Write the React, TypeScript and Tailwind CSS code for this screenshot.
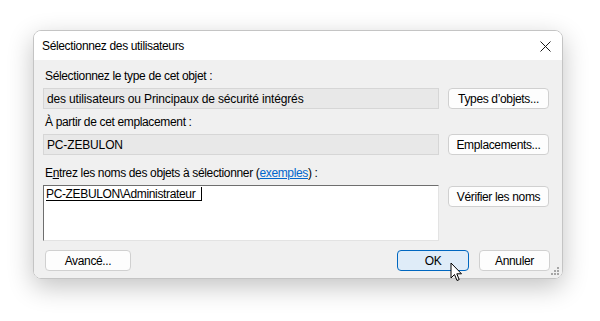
import React from 'react'

const font = { fontFamily: '"Liberation Sans", Arial, sans-serif' }

function Btn({ label, className = '' }: { label: React.ReactNode; className?: string }) {
  return (
    <div
      className={
        'h-[21px] flex items-center justify-center rounded-[4px] border border-[#d0d0d0] bg-[#fdfdfd] text-[12px] tracking-[-0.35px] text-black ' +
        className
      }
    >
      {label}
    </div>
  )
}

export default function App() {
  return (
    <div className="relative w-[600px] h-[321px] bg-white pt-[30px] pl-[33px] text-black" style={font}>
      <div className="w-[530px] h-[249px] flex flex-col rounded-[8px] border border-[#c4c4c4] overflow-hidden shadow-[0_8px_26px_rgba(0,0,0,0.24)]">
        {/* title bar */}
        <div className="h-[29px] shrink-0 bg-white flex items-center justify-between pl-[8px] pr-[11px]">
          <span className="text-[12px] tracking-[-0.35px] pt-[1px]">Sélectionnez des utilisateurs</span>
          <svg width="11" height="11" viewBox="0 0 11 11" className="mt-[2px]">
            <path d="M0.5 0.5 L10.5 10.5 M10.5 0.5 L0.5 10.5" stroke="#1a1a1a" strokeWidth="1" />
          </svg>
        </div>

        {/* body */}
        <div className="relative flex-1 bg-[#f0f0f0] pl-[9px] pr-[12px] pt-[9px] text-[12px] tracking-[-0.35px]">
          <div className="h-[15px] leading-[15px] pl-[2px]">Sélectionnez le type de cet objet :</div>
          <div className="mt-[4px] flex items-center gap-[9px]">
            <div className="w-[396px] h-[21px] flex items-center pl-[3px] bg-[#e8e8e8] border border-[#d6d6d6] tracking-[-0.15px]">
              des utilisateurs ou Principaux de sécurité intégrés
            </div>
            <Btn label="Types d’objets..." className="w-[101px] h-[20px]" />
          </div>

          <div className="mt-[6px] h-[15px] leading-[15px] pl-[2px]">À partir de cet emplacement :</div>
          <div className="mt-[4px] flex items-center gap-[9px]">
            <div className="w-[396px] h-[21px] flex items-center pl-[3px] bg-[#e8e8e8] border border-[#d6d6d6] tracking-[-0.15px]">
              PC-ZEBULON
            </div>
            <Btn label="Emplacements..." className="w-[101px] h-[20px]" />
          </div>

          <div className="mt-[11px] h-[15px] leading-[15px] pl-[2px]">
            E<span className="underline">n</span>trez les noms des objets à sélectionner (
            <span className="text-[#0066cc] underline">exemples</span>) :
          </div>
          <div className="mt-[4px] flex items-start gap-[9px]">
            <div className="w-[396px] h-[56px] bg-white border border-t-[#6e6e6e] border-l-[#6e6e6e] border-r-[#e3e3e3] border-b-[#e3e3e3] pl-[2px] pt-[1px]">
              <div className="flex items-center h-[14px]">
                <span className="underline underline-offset-[2px] leading-[14px]">PC-ZEBULON\Administrateur&nbsp;&nbsp;</span>
                <span className="w-[1px] h-[14px] bg-black" />
              </div>
            </div>
            <Btn label="Vérifier les noms" className="w-[101px] h-[20px] mt-[1px]" />
          </div>

          <div className="mt-[9px] flex items-center">
            <Btn label="Avancé..." className="ml-[2px] w-[86px]" />
            <div className="flex-1" />
            <div className="w-[72px] h-[21px] flex items-center justify-center rounded-[4px] border border-[#0067c0] bg-[#dfecf8]">
              OK
            </div>
            <Btn label="Annuler" className="ml-[10px] w-[71px]" />
          </div>

          {/* resize grip */}
          <svg width="8" height="8" viewBox="0 0 8 8" className="absolute right-[3px] bottom-[3px]">
            <rect x="6" y="0" width="2" height="2" fill="#a6a6a6" />
            <rect x="3" y="3" width="2" height="2" fill="#a6a6a6" />
            <rect x="6" y="3" width="2" height="2" fill="#a6a6a6" />
            <rect x="0" y="6" width="2" height="2" fill="#a6a6a6" />
            <rect x="3" y="6" width="2" height="2" fill="#a6a6a6" />
            <rect x="6" y="6" width="2" height="2" fill="#a6a6a6" />
          </svg>
        </div>
      </div>

      {/* mouse pointer */}
      <svg width="14" height="21" viewBox="0 0 14 21" className="absolute left-[450px] top-[262px]">
        <path
          d="M1 1 L1 16 L4.5 12.5 L7 18.5 L9.2 17.6 L6.8 11.8 L11.5 11.8 Z"
          fill="white"
          stroke="black"
          strokeWidth="1"
          strokeLinejoin="miter"
        />
      </svg>
    </div>
  )
}
